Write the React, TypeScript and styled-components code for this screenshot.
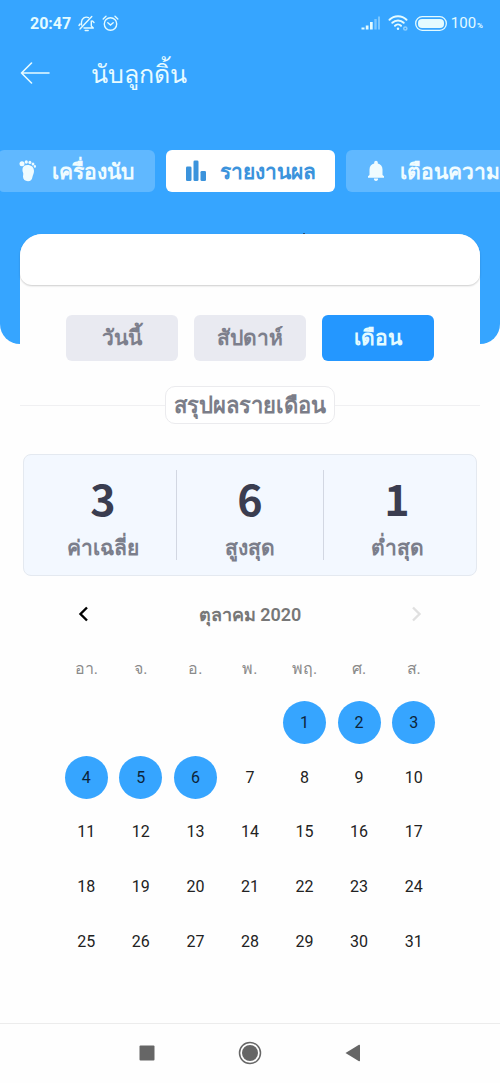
import React from 'react';
import styled, { createGlobalStyle } from 'styled-components';

const fontUi = `'Noto Sans', 'Roboto', sans-serif`;
const fontDigits = `'Roboto', 'Noto Sans', sans-serif`;

const GlobalStyle = createGlobalStyle`
  *, *::before, *::after { box-sizing: border-box; }
  body { margin: 0; background: #fefefe; font-family: ${fontUi}; }
  button { border: 0; padding: 0; background: none; font: inherit; color: inherit; cursor: pointer; }
  svg { display: block; flex: none; }
`;

const Screen = styled.div`
  display: flex;
  flex-direction: column;
  min-height: 100vh;
  overflow-x: hidden;
`;

const Hero = styled.header`
  padding-bottom: 152px;
  background: #36a5ff;
  border-radius: 0 0 20px 20px;
  color: #fff;
`;

const StatusBar = styled.div`
  display: flex;
  align-items: center;
  justify-content: space-between;
  height: 46px;
  padding: 0 17px 0 30px;
  font-family: ${fontDigits};
  color: #e4fbff;
`;

const StatusGroup = styled.div`
  display: flex;
  align-items: center;
  gap: 7px;
`;

const Clock = styled.time`
  font-size: 16px;
  font-weight: 700;
`;

const Battery = styled.span`
  display: flex;
  align-items: baseline;
  gap: 1px;
  margin-left: -3px;
  font-size: 15px;
`;

const Percent = styled.small`
  font-size: 8px;
  font-weight: 700;
`;

const AppBar = styled.div`
  display: flex;
  align-items: center;
  gap: 40px;
  height: 54px;
  padding: 0 20px;
`;

const Title = styled.h1`
  margin: 0;
  font-size: 25px;
  font-weight: 400;
  line-height: 32px;
  color: #e8fbff;
`;

const Tabs = styled.nav`
  display: flex;
  gap: 11px;
  margin: 50px 0 0 -2px;
  overflow: hidden;
`;

const Tab = styled.button<{ $active?: boolean; $width: number }>`
  display: flex;
  flex: 0 0 ${p => p.$width}px;
  align-items: center;
  gap: 12px;
  height: 42px;
  padding-left: 18px;
  border-radius: 6px;
  background: ${p => (p.$active ? '#fff' : '#60b8ff')};
  color: ${p => (p.$active ? '#3b93dc' : '#f0fcff')};
  font-size: 21px;
  font-weight: 700;
  white-space: nowrap;
`;

const Card = styled.main`
  flex: 1;
  margin: -110px 20px 0;
  padding-bottom: 54px;
  border-radius: 22px 22px 0 0;
  background: #fefefe;
`;

const CardTop = styled.div`
  position: relative;
  height: 51px;
  border-radius: 22px 22px 12px 12px;
  background: #fff;
  box-shadow: 0 1px 2px rgba(0, 0, 0, 0.2);

  &::before {
    content: '';
    position: absolute;
    top: -1px;
    left: 62%;
    width: 2px;
    height: 1px;
    margin-left: -2px;
    background: #24507a;
  }
`;

const Periods = styled.div`
  display: flex;
  justify-content: center;
  gap: 16px;
  padding: 30px 0 25px;
`;

const Period = styled.button<{ $active?: boolean }>`
  flex: 0 1 112px;
  height: 46px;
  padding-bottom: 2px;
  border-radius: 6px;
  background: ${p => (p.$active ? '#2497ff' : '#e9eaf1')};
  color: ${p => (p.$active ? '#e4fbff' : '#7d7f8c')};
  font-size: 21px;
  font-weight: 700;
  line-height: 30px;
`;

const SectionHead = styled.div`
  display: flex;
  align-items: center;

  &::before,
  &::after {
    content: '';
    flex: 1;
    height: 1px;
    background: #f0f0f2;
  }
`;

const SectionTitle = styled.h2`
  display: flex;
  align-items: center;
  justify-content: center;
  width: 170px;
  height: 38px;
  margin: 0;
  border: 1px solid #ebebee;
  border-radius: 10px;
  background: #fff;
  color: #7b7d88;
  font-size: 22px;
  font-weight: 700;
  white-space: nowrap;
`;

const Stats = styled.dl`
  display: flex;
  margin: 30px 3px 0;
  padding: 15px 6px;
  border: 1px solid #e4e9f0;
  border-radius: 8px;
  background: #f3f8ff;
`;

const Stat = styled.div`
  display: flex;
  flex: 1;
  flex-direction: column-reverse;
  justify-content: flex-end;
  height: 90px;
  text-align: center;

  & + & { border-left: 1px solid #d2d7e2; }
`;

const StatLabel = styled.dt`
  color: #7b7e8b;
  font-size: 21px;
  font-weight: 700;
  line-height: 46px;
`;

const StatValue = styled.dd`
  margin: 0;
  color: #3a3d50;
  font-family: 'Noto Sans CJK SC', 'Noto Sans', sans-serif;
  font-size: 43px;
  font-weight: 700;
  line-height: 54px;
`;

const Calendar = styled.section`
  padding: 0 39px;
`;

const MonthBar = styled.div`
  display: flex;
  align-items: center;
  justify-content: space-between;
  height: 40px;
  margin-top: 18px;
  padding: 0 18px;
`;

const MonthTitle = styled.h3`
  margin: 0;
  color: #777;
  font-family: ${fontDigits};
  font-size: 18px;
  font-weight: 600;
`;

const Arrow = styled.button<{ $muted?: boolean }>`
  color: ${p => (p.$muted ? '#e0e0e0' : '#000')};
`;

const Days = styled.table`
  width: 100%;
  height: 328px;
  border-collapse: collapse;
  table-layout: fixed;
  margin-top: 7px;
  font-family: ${fontDigits};
  font-size: 16px;
  text-align: center;

  th, td { height: 54px; padding: 0; }
  th { color: #8b8b8b; font-weight: 400; }
`;

const Day = styled.button<{ $marked: boolean }>`
  display: block;
  width: 43px;
  height: 43px;
  margin: 0 auto;
  border-radius: 50%;
  background: ${p => (p.$marked ? '#36a5ff' : 'transparent')};
  color: ${p => (p.$marked ? '#0d2438' : '#222')};
`;

const SystemNav = styled.nav`
  display: flex;
  align-items: center;
  justify-content: center;
  gap: 55px;
  height: 60px;
  padding-bottom: 2px;
  border-top: 1px solid #ececec;
  color: #666;
`;

const SystemButton = styled.button`
  display: flex;
  align-items: center;
  justify-content: center;
  width: 48px;
  height: 48px;
`;

const MutedBell = () => (
  <svg width="17" height="17" viewBox="0 0 17 17" fill="none" stroke="currentColor" strokeWidth="1.4" strokeLinecap="round" strokeLinejoin="round">
    <path d="M3.500 10V7A5 5 0 0 1 10.500 2.600M13.300 6v5l2 2H6M7.200 15.500h3M2 14 13.800 1.500M1 10.500l1-1.500M14.500 6l1.500 1.500" />
  </svg>
);

const Alarm = () => (
  <svg width="17" height="17" viewBox="0 0 17 17" fill="none" stroke="currentColor" strokeWidth="1.4" strokeLinecap="round">
    <circle cx="8.5" cy="9" r="6.2" />
    <path d="M1.2 4 4 1.3M15.8 4 13 1.3M5.8 7.8l2.7 2.3 2.7-2.3" />
  </svg>
);

const Signal = () => (
  <svg width="20" height="14" viewBox="0 0 20 14" fill="currentColor">
    <path d="M.5 11.500h3v2h-3zM4.800 9.500h2.700v4H4.800zM9 6h2.700v7.500H9z" />
    <path d="M13.300 3h2.400v10.500h-2.400zM17 .5h2v13h-2z" opacity=".4" />
  </svg>
);

const Wifi = () => (
  <svg width="20" height="16" viewBox="0 0 20 16" fill="none" stroke="currentColor" strokeWidth="2" strokeLinecap="round">
    <path d="M1.500 4.700a12 12 0 0 1 17 0M4.300 7.800a8 8 0 0 1 11.400 0M7 10.700a4.300 4.300 0 0 1 6 0" />
    <circle cx="10" cy="13.700" r="1.200" fill="currentColor" stroke="none" />
    <circle cx="17.300" cy="13.500" r="1.600" strokeWidth="1.500" opacity=".5" />
  </svg>
);

const BatteryIcon = () => (
  <svg width="32" height="15" viewBox="0 0 32 15">
    <rect x=".7" y=".7" width="30.600" height="13.600" rx="6.500" fill="none" stroke="currentColor" strokeWidth="1.300" />
    <rect x="3" y="3" width="26" height="9" rx="4" fill="currentColor" />
  </svg>
);

const BackArrow = () => (
  <svg width="31" height="22" viewBox="0 0 31 22" fill="none" stroke="#e8fbff" strokeWidth="1.600" strokeLinecap="round" strokeLinejoin="round">
    <path d="M29 11H1.500M11.500 1 1.500 11l10 10" />
  </svg>
);

const Foot = () => (
  <svg width="24" height="24" viewBox="0 0 24 24" fill="currentColor">
    <ellipse cx="6" cy="4.800" rx="2.500" ry="2.500" />
    <ellipse cx="10.300" cy="3" rx="1.600" ry="1.700" />
    <ellipse cx="13.900" cy="3.400" rx="1.500" ry="1.600" />
    <ellipse cx="17" cy="4.900" rx="1.400" ry="1.500" />
    <ellipse cx="18.900" cy="7.400" rx="1.100" ry="1.300" />
    <path d="M11.500 6c4 0 6.500 2.300 6.500 6 0 2.600-1.200 4-1.600 6.200-.5 2.700-1.900 4-4.400 4-3 0-5-1.600-5-4.400 0-1.700.6-2.700 0-4.300C6 11 6 6 11.500 6z" />
  </svg>
);

const Bars = () => (
  <svg width="24" height="24" viewBox="0 0 24 24" fill="currentColor">
    <rect x="2" y="7.500" width="5.500" height="14.500" rx="1.300" />
    <rect x="9.500" y="1.500" width="5" height="20.500" rx="1.300" />
    <rect x="16.500" y="12" width="5.500" height="10" rx="1.300" />
  </svg>
);

const Bell = () => (
  <svg width="24" height="24" viewBox="0 0 24 24" fill="currentColor">
    <path d="M12 22a2 2 0 0 0 2-2.500h-4a2 2 0 0 0 2 2.500zm6.500-6v-5.500c0-3.200-1.900-5.300-4.700-6V3.500a1.800 1.800 0 0 0-3.600 0v1c-2.800.7-4.700 2.800-4.700 6V16L4 17.300v1.500h16v-1.500z" />
  </svg>
);

const Chevron = ({ d }: { d: string }) => (
  <svg width="14" height="18" viewBox="0 0 14 18" fill="none" stroke="currentColor" strokeWidth="2.400">
    <path d={d} />
  </svg>
);

const weekdays = ['อา.', 'จ.', 'อ.', 'พ.', 'พฤ.', 'ศ.', 'ส.'];
const firstWeekday = 4;
const daysInMonth = 31;
const markedUntil = 6;
const weeks = Array.from({ length: 5 }, (_, w) =>
  Array.from({ length: 7 }, (_, d) => w * 7 + d - firstWeekday + 1),
);

const stats = [
  { label: 'ค่าเฉลี่ย', value: 3 },
  { label: 'สูงสุด', value: 6 },
  { label: 'ต่ำสุด', value: 1 },
];

export default function App() {
  return (
    <>
      <GlobalStyle />
      <Screen>
        <Hero>
          <StatusBar>
            <StatusGroup>
              <Clock>20:47</Clock>
              <MutedBell />
              <Alarm />
            </StatusGroup>
            <StatusGroup>
              <Signal />
              <Wifi />
              <BatteryIcon />
              <Battery>
                100<Percent>%</Percent>
              </Battery>
            </StatusGroup>
          </StatusBar>
          <AppBar>
            <button aria-label="ย้อนกลับ"><BackArrow /></button>
            <Title>นับลูกดิ้น</Title>
          </AppBar>
          <Tabs>
            <Tab $width={157}><Foot />เครื่องนับ</Tab>
            <Tab $width={169} $active><Bars />รายงานผล</Tab>
            <Tab $width={200}><Bell />เตือนความ</Tab>
          </Tabs>
        </Hero>
        <Card>
          <CardTop />
          <Periods>
            <Period>วันนี้</Period>
            <Period>สัปดาห์</Period>
            <Period $active>เดือน</Period>
          </Periods>
          <SectionHead>
            <SectionTitle>สรุปผลรายเดือน</SectionTitle>
          </SectionHead>
          <Stats>
            {stats.map(s => (
              <Stat key={s.label}>
                <StatLabel>{s.label}</StatLabel>
                <StatValue>{s.value}</StatValue>
              </Stat>
            ))}
          </Stats>
          <Calendar>
            <MonthBar>
              <Arrow aria-label="เดือนก่อน"><Chevron d="M10 2.500 3.500 9l6.500 6.500" /></Arrow>
              <MonthTitle>ตุลาคม 2020</MonthTitle>
              <Arrow $muted aria-label="เดือนถัดไป"><Chevron d="M4 2.500 10.500 9 4 15.500" /></Arrow>
            </MonthBar>
            <Days>
              <thead>
                <tr>{weekdays.map(d => <th key={d} scope="col">{d}</th>)}</tr>
              </thead>
              <tbody>
                {weeks.map((week, i) => (
                  <tr key={i}>
                    {week.map(day => (
                      <td key={day}>
                        {day > 0 && day <= daysInMonth && (
                          <Day $marked={day <= markedUntil}>{day}</Day>
                        )}
                      </td>
                    ))}
                  </tr>
                ))}
              </tbody>
            </Days>
          </Calendar>
        </Card>
        <SystemNav>
          <SystemButton aria-label="แอปล่าสุด">
            <svg width="16" height="16" viewBox="0 0 16 16" fill="currentColor"><rect x=".5" y=".5" width="15" height="15" rx="1" /></svg>
          </SystemButton>
          <SystemButton aria-label="หน้าหลัก">
            <svg width="24" height="24" viewBox="0 0 24 24">
              <circle cx="12" cy="12" r="10.500" fill="none" stroke="currentColor" strokeWidth="1.500" />
              <circle cx="12" cy="12" r="8" fill="currentColor" />
            </svg>
          </SystemButton>
          <SystemButton aria-label="กลับ">
            <svg width="16" height="18" viewBox="0 0 16 18" fill="currentColor"><path d="M.5 9 14 .8q1-.3 1 .7v15q0 1-1 .7z" /></svg>
          </SystemButton>
        </SystemNav>
      </Screen>
    </>
  );
}
